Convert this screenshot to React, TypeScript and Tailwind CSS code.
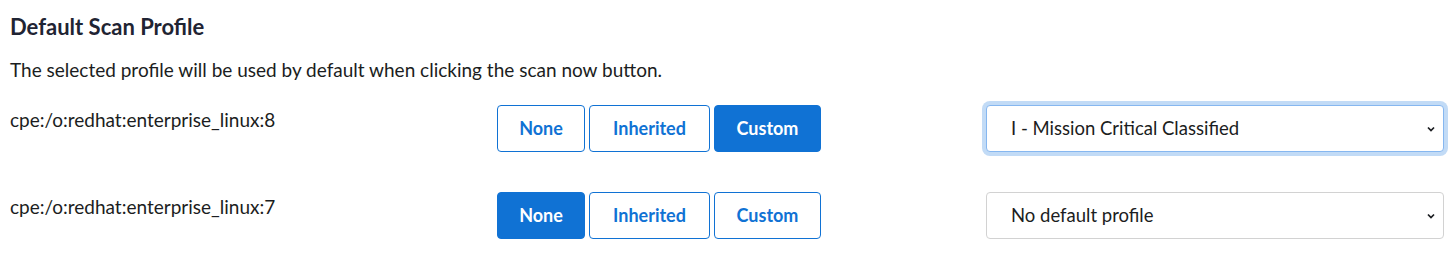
import { useState } from 'react';

const PROFILES = [
  'No default profile',
  'I - Mission Critical Classified',
  'II - Mission Support Classified',
  'III - Administrative Classified',
];

const ROWS = [
  { cpe: 'cpe:/o:redhat:enterprise_linux:8', mode: 'Custom', profile: PROFILES[1], focused: true },
  { cpe: 'cpe:/o:redhat:enterprise_linux:7', mode: 'None', profile: PROFILES[0], focused: false },
] as const;

const MODES = [
  { label: 'None', w: 'w-[88px]' },
  { label: 'Inherited', w: 'w-[121px]' },
  { label: 'Custom', w: 'w-[107px]' },
] as const;

function ProfileRow({ cpe, mode, profile, focused }: (typeof ROWS)[number]) {
  const [active, setActive] = useState<string>(mode);
  const [value, setValue] = useState<string>(profile);

  return (
    <div className="grid h-[87px] grid-cols-[487px_489px_458px] items-start">
      <div className="pt-[3px] text-[19px] leading-[24px] text-[#1b1d21]">{cpe}</div>

      <div className="flex gap-[4px]">
        {MODES.map(({ label, w }) => (
          <button
            key={label}
            type="button"
            onClick={() => setActive(label)}
            className={
              'h-[47px] rounded-[4px] border border-[#1072d4] text-[18px] font-bold ' +
              w +
              (active === label ? ' bg-[#1072d4] text-white' : ' bg-white text-[#1072d4]')
            }
          >
            {label}
          </button>
        ))}
      </div>

      <div className="relative">
        <select
          value={value}
          onChange={(e) => setValue(e.target.value)}
          className={
            'h-[47px] w-full appearance-none rounded-[4px] border bg-white pl-[24px] pr-10 text-[18.5px] text-[#1b1d21] outline-none ' +
            (focused
              ? 'border-[#86b7f0] shadow-[0_0_0_4px_#c2dbf6]'
              : 'border-[#d2d2d2]')
          }
        >
          {PROFILES.map((p) => (
            <option key={p}>{p}</option>
          ))}
        </select>
        <svg
          viewBox="0 0 16 16"
          className="pointer-events-none absolute right-[9px] top-[20px] h-[8px] w-[8px]"
        >
          <path d="M2 5l6 6 6-6" fill="none" stroke="#1b1d21" strokeWidth="3.5" />
        </svg>
      </div>
    </div>
  );
}

export default function App() {
  return (
    <div
      className="min-h-screen bg-white px-[10px] pt-[13px]"
      style={{ fontFamily: 'Lato, "Open Sans", sans-serif' }}
    >
      <h2 className="text-[22px] font-bold leading-[28px] text-[#1f2433]">Default Scan Profile</h2>
      <p className="mt-[17px] text-[19px] leading-[24px] text-[#1b1d21]">
        The selected profile will be used by default when clicking the scan now button.
      </p>
      <div className="mt-[23px]">
        {ROWS.map((r) => (
          <ProfileRow key={r.cpe} {...r} />
        ))}
      </div>
    </div>
  );
}
